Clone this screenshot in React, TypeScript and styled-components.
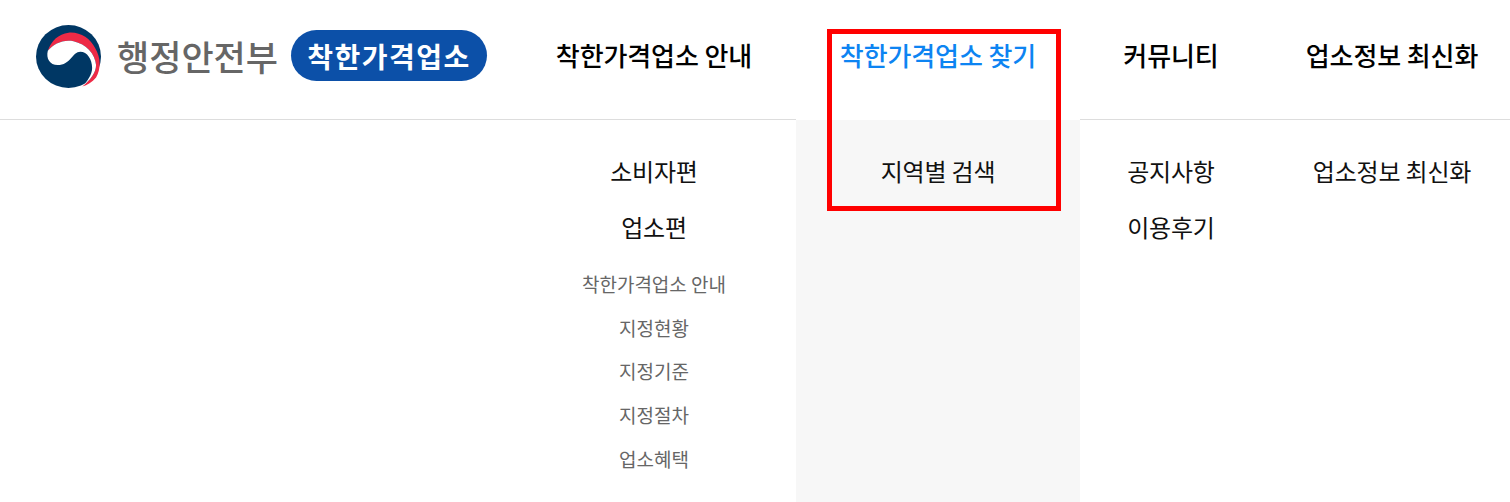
import styled, { createGlobalStyle } from "styled-components";

const GlobalStyle = createGlobalStyle`
  html, body {
    margin: 0;
    padding: 0;
    background: #fff;
    overflow: hidden;
    font-family: "Noto Sans CJK KR", "Noto Sans", sans-serif;
  }
`;

const Page = styled.div`
  position: relative;
  width: 1510px;
  height: 502px;
  overflow: hidden;
`;

const Header = styled.header`
  display: grid;
  grid-template-columns: 512px 284px 284px 182px 260px;
  height: 502px;
`;

const Brand = styled.div`
  display: flex;
  align-items: flex-start;
  padding: 25px 0 0 36px;
  box-sizing: border-box;
  height: 120px;
  border-bottom: 1px solid #ddd;
`;

const BrandName = styled.span`
  width: 160px;
  margin: 5px 0 0 16px;
  font-size: 35px;
  line-height: 52px;
  font-weight: 500;
  color: #666;
  white-space: nowrap;
`;

const Badge = styled.span`
  display: flex;
  align-items: center;
  justify-content: center;
  width: 196px;
  height: 51px;
  margin: 5px 0 0 14px;
  border-radius: 26px;
  background: #0c50a8;
  color: #fff;
  font-size: 28px;
  font-weight: 700;
  letter-spacing: 1.5px;
  white-space: nowrap;
`;

const Column = styled.nav<{ $active?: boolean }>`
  display: flex;
  flex-direction: column;
  align-items: center;
  background: ${(p) => (p.$active ? "#f7f7f7" : "transparent")};
  position: relative;
  &::before {
    content: "";
    position: absolute;
    top: 0;
    left: 0;
    right: 0;
    height: 120px;
    box-sizing: border-box;
    background: #fff;
    border-bottom: ${(p) => (p.$active ? "0" : "1px solid #ddd")};
  }
`;

const Title = styled.a<{ $active?: boolean }>`
  position: relative;
  height: 120px;
  padding-top: 35px;
  box-sizing: border-box;
  font-size: 26px;
  line-height: 40px;
  font-weight: 500;
  letter-spacing: -0.1px;
  color: ${(p) => (p.$active ? "#0d84f2" : "#000")};
  white-space: nowrap;
`;

const Items = styled.ul`
  list-style: none;
  margin: 0;
  padding: 23px 0 0;
  display: flex;
  flex-direction: column;
  align-items: center;
`;

const Item = styled.li`
  font-size: 24px;
  line-height: 56px;
  letter-spacing: -0.2px;
  color: #111;
  white-space: nowrap;
  text-align: center;
`;

const SubList = styled.ul`
  list-style: none;
  margin: 0;
  padding: 7px 0 0;
`;

const SubItem = styled.li`
  height: 43.7px;
  font-size: 19px;
  line-height: 44px;
  letter-spacing: 0;
  color: #666;
  white-space: nowrap;
  text-align: center;
`;

const Highlight = styled.div`
  position: absolute;
  left: 827px;
  top: 29px;
  width: 234px;
  height: 182px;
  box-sizing: border-box;
  border: 5px solid #f00;
  pointer-events: none;
`;

function Emblem() {
  return (
    <svg width="65" height="63" viewBox="0 0 66 66" preserveAspectRatio="none">
      <circle cx="33" cy="33" r="33" fill="#003764" />
      <path
        d="M12 27C15 17 23 9 33 8C45 7 55 14 60 24C66 34 66 46 61 55C57 60 52 63 47 64.500C55 58 61 50 61 42C60 30 51 20 38 17C27 15 18 20 12 27Z"
        fill="#ee2a46"
      />
      <path
        d="M12 27C18 20 27 15 38 17C51 20 60 30 61 42C61 50 55 58 47 64.500C52 59 57 52 57 45C57 36 52 28 45 28C37 28 35 42 22 42C14 42 10 35 12 27Z"
        fill="#fff"
      />
    </svg>
  );
}

export default function App() {
  return (
    <Page>
      <GlobalStyle />
      <Header>
        <Brand>
          <Emblem />
          <BrandName>행정안전부</BrandName>
          <Badge>착한가격업소</Badge>
        </Brand>
        <Column>
          <Title>착한가격업소 안내</Title>
          <Items>
            <Item>소비자편</Item>
            <Item>
              업소편
              <SubList>
                <SubItem>착한가격업소 안내</SubItem>
                <SubItem>지정현황</SubItem>
                <SubItem>지정기준</SubItem>
                <SubItem>지정절차</SubItem>
                <SubItem>업소혜택</SubItem>
              </SubList>
            </Item>
          </Items>
        </Column>
        <Column $active>
          <Title $active>착한가격업소 찾기</Title>
          <Items>
            <Item>지역별 검색</Item>
          </Items>
        </Column>
        <Column>
          <Title>커뮤니티</Title>
          <Items>
            <Item>공지사항</Item>
            <Item>이용후기</Item>
          </Items>
        </Column>
        <Column>
          <Title>업소정보 최신화</Title>
          <Items>
            <Item>업소정보 최신화</Item>
          </Items>
        </Column>
      </Header>
      <Highlight />
    </Page>
  );
}
